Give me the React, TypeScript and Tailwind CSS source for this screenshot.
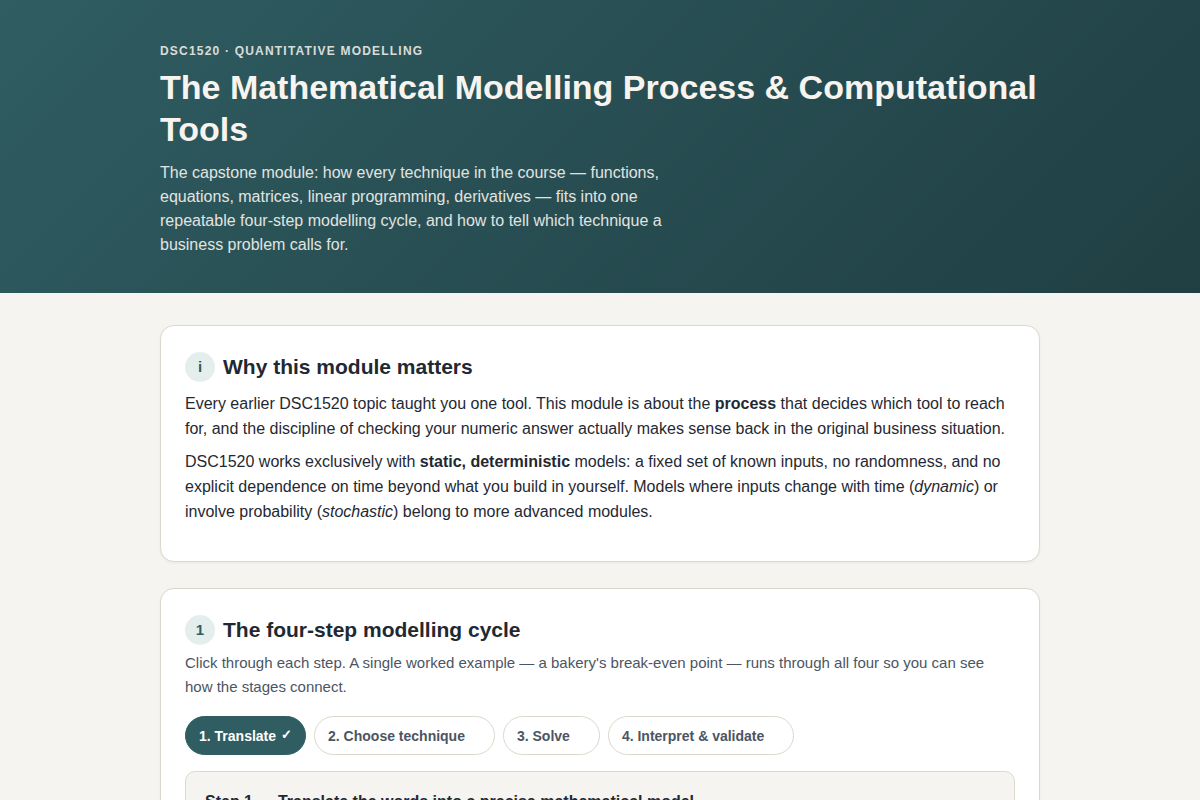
import { useState, type ReactNode } from "react";

interface Step {
  label: string;
  heading: string;
}

const steps: Step[] = [
  {
    label: "1. Translate",
    heading: "Step 1 — Translate the words into a precise mathematical model",
  },
  { label: "2. Choose technique", heading: "Step 2 — Choose technique" },
  { label: "3. Solve", heading: "Step 3 — Solve" },
  { label: "4. Interpret & validate", heading: "Step 4 — Interpret & validate" },
];

interface CardProps {
  badge: string;
  title: string;
  children: ReactNode;
}

function Card({ badge, title, children }: CardProps) {
  return (
    <section className="rounded-[14px] border border-[#dcd8cc] bg-white px-6 py-[26px] shadow-[0_1px_3px_rgba(0,0,0,0.05)]">
      <h2 className="mb-[6px] flex items-center gap-2 text-[21px] leading-[30px] font-bold">
        <span className="flex size-[30px] shrink-0 items-center justify-center rounded-full bg-[#e4efed] text-[15px] text-[#2f5d62]">
          {badge}
        </span>
        {title}
      </h2>
      {children}
    </section>
  );
}

function ModellingCycle() {
  const [active, setActive] = useState(0);
  const [visited, setVisited] = useState<number[]>([0]);

  const openStep = (index: number) => {
    setActive(index);
    setVisited((prev) => (prev.includes(index) ? prev : [...prev, index]));
  };

  return (
    <>
      <div className="mb-4 flex flex-wrap gap-2">
        {steps.map((step, index) => (
          <button
            key={step.label}
            type="button"
            onClick={() => openStep(index)}
            className={`flex h-[39px] items-center gap-[5px] rounded-full border px-[13px] text-sm font-bold ${
              index === active
                ? "border-[#2f5d62] bg-[#2f5d62] text-white"
                : "border-[#dcd8cc] bg-white text-[#4b5563]"
            }`}
          >
            {step.label}
            {/* Hidden ticks keep their width so the row never jumps */}
            <span className={`text-[13px] ${visited.includes(index) ? "" : "invisible"}`}>✓</span>
          </button>
        ))}
      </div>
      <div className="min-h-40 rounded-[10px] border border-[#dcd8cc] bg-[#f6f4f0] px-[19px] py-[18px]">
        <h3 className="text-base font-bold">{steps[active].heading}</h3>
      </div>
    </>
  );
}

export default function App() {
  return (
    <div className="min-h-screen bg-[#f6f4f0] font-['Liberation_Sans',Arial,sans-serif] text-base text-[#1f2933]">
      <header className="bg-linear-135 from-[#2f5d62] to-[#203f43] px-5 pt-10 pb-9 text-[#f7f4ef]">
        <div className="mx-auto max-w-[880px]">
          <p className="text-xs leading-[22px] font-bold tracking-widest uppercase opacity-85">
            DSC1520 · Quantitative Modelling
          </p>
          <h1 className="mt-1 text-[34px] leading-[42px] font-bold">
            The Mathematical Modelling Process &amp; Computational Tools
          </h1>
          <p className="mt-[11px] max-w-[520px] leading-6 opacity-90">
            The capstone module: how every technique in the course — functions, equations,
            matrices, linear programming, derivatives — fits into one repeatable four-step
            modelling cycle, and how to tell which technique a business problem calls for.
          </p>
        </div>
      </header>

      <main className="mx-auto flex max-w-[920px] flex-col gap-[26px] px-5 py-8">
        <Card badge="i" title="Why this module matters">
          <div className="flex flex-col gap-2 pt-[3px] pb-[11px] leading-[25px]">
            <p>
              Every earlier DSC1520 topic taught you one tool. This module is about the{" "}
              <strong>process</strong> that decides which tool to reach for, and the discipline of
              checking your numeric answer actually makes sense back in the original business
              situation.
            </p>
            <p>
              DSC1520 works exclusively with <strong>static, deterministic</strong> models: a fixed
              set of known inputs, no randomness, and no explicit dependence on time beyond what
              you build in yourself. Models where inputs change with time (<em>dynamic</em>) or
              involve probability (<em>stochastic</em>) belong to more advanced modules.
            </p>
          </div>
        </Card>

        <Card badge="1" title="The four-step modelling cycle">
          <p className="mb-[17px] text-[15px] leading-6 text-[#4b5563]">
            Click through each step. A single worked example — a bakery's break-even point — runs
            through all four so you can see how the stages connect.
          </p>
          <ModellingCycle />
        </Card>
      </main>
    </div>
  );
}
